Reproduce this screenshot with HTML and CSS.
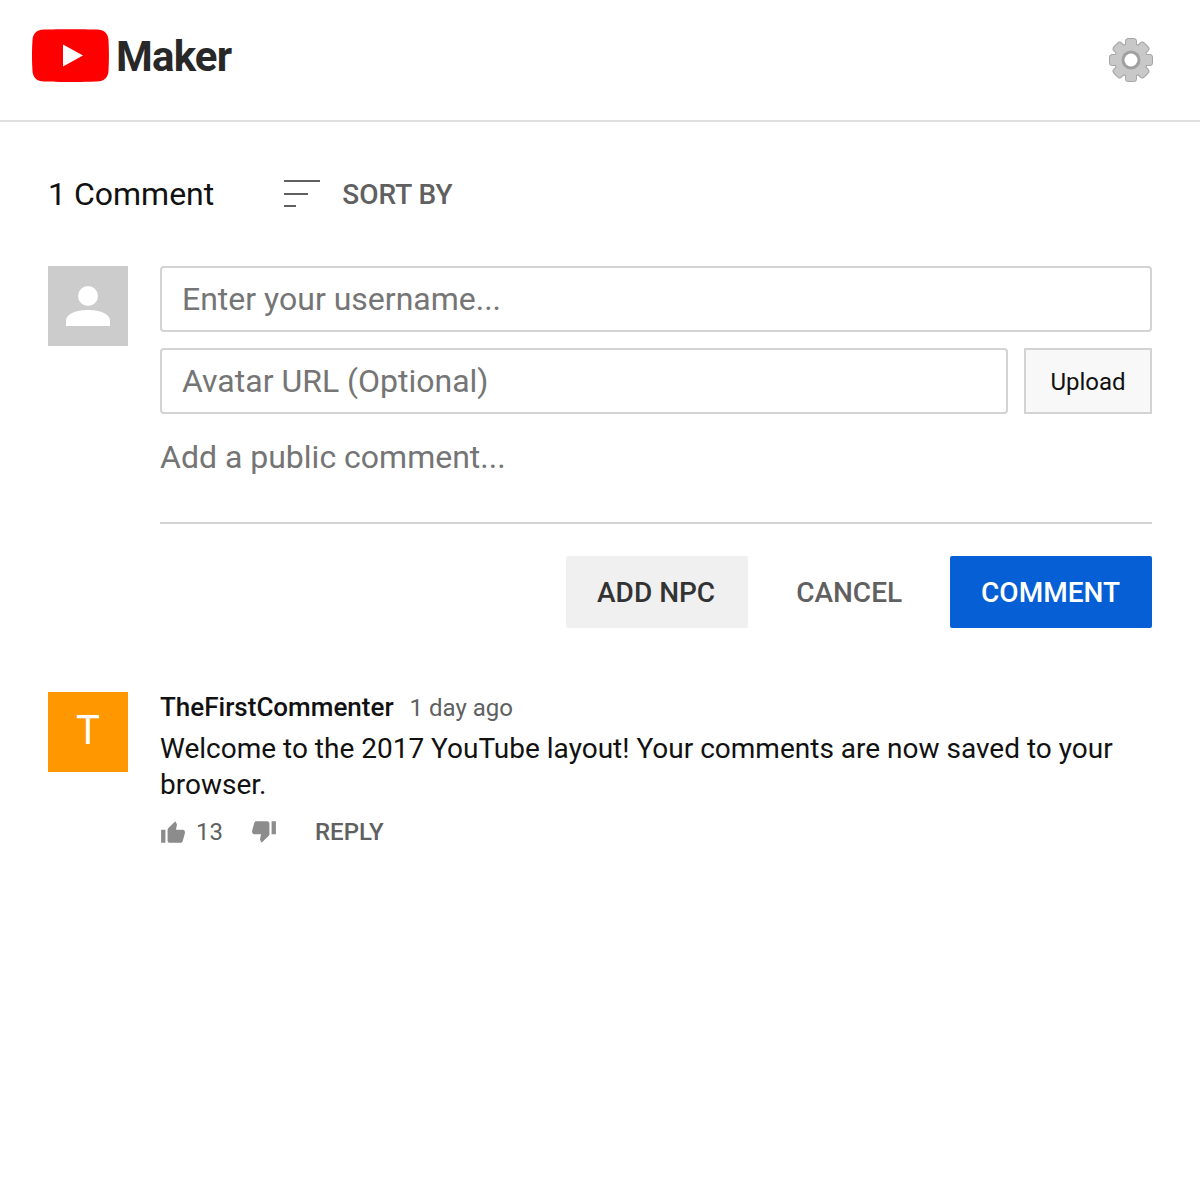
FILE: index.html
```html
<!DOCTYPE html>
<html>
<head>
    <meta charset="UTF-8">
    <title>YouTube Comment Maker</title>
    <link rel="stylesheet" href="styles.css">
</head>
<body>
    <div class="header">
        <div class="brand">
            <svg class="logo" viewBox="0 0 77 53">
                <path d="M12 .5C25 0 52 0 65 .5 72 .8 76 4 76.500 11c.6 10 .6 21 0 31-.5 7-4.500 10.200-11.500 10.500-13 .6-40 .6-53 0C5 52.200 1 49 .5 42-.2 32-.2 21 .5 11 1 4 5 .8 12 .5z" fill="#f00"/>
                <path d="M31 15.500 51 26.500 31 37.500z" fill="#fff"/>
            </svg>
            <span class="brand-name">Maker</span>
        </div>
        <svg class="gear" viewBox="0 0 44 44">
            <defs>
                <g id="gear-shape">
                    <rect x="17" y="1" width="10" height="42" rx="2.500"/>
                    <rect x="17" y="1" width="10" height="42" rx="2.500" transform="rotate(45 22 22)"/>
                    <rect x="17" y="1" width="10" height="42" rx="2.500" transform="rotate(90 22 22)"/>
                    <rect x="17" y="1" width="10" height="42" rx="2.500" transform="rotate(135 22 22)"/>
                    <circle cx="22" cy="22" r="16"/>
                </g>
            </defs>
            <use href="#gear-shape" fill="#a6a6a6" stroke="#a6a6a6" stroke-width="2"/>
            <use href="#gear-shape" fill="#c8c8c8"/>
            <circle cx="22" cy="22" r="9.500" fill="#a0a0a0"/>
            <circle cx="22" cy="22" r="6.500" fill="#fff"/>
        </svg>
    </div>

    <div class="main">
        <div class="count-row">
            <span class="count">1 Comment</span>
            <div class="sort">
                <svg class="sort-icon" viewBox="0 0 36 28">
                    <path d="M0 1h36M0 14h24M0 26h12" stroke="#606060" stroke-width="2" fill="none"/>
                </svg>
                <span class="sort-label">SORT BY</span>
            </div>
        </div>

        <div class="composer">
            <div class="avatar avatar-empty">
                <svg class="person" viewBox="0 0 44 40">
                    <circle cx="22" cy="10" r="10" fill="#fff"/>
                    <path d="M0 40v-5C0 27 12 24 22 24s22 3 22 11v5z" fill="#fff"/>
                </svg>
            </div>
            <div class="composer-body">
                <input class="text-input" type="text" placeholder="Enter your username...">
                <div class="url-row">
                    <input class="text-input url-input" type="text" placeholder="Avatar URL (Optional)">
                    <button class="upload-btn">Upload</button>
                </div>
                <div class="comment-box">Add a public comment...</div>
                <div class="button-row">
                    <button class="btn btn-npc">ADD NPC</button>
                    <button class="btn btn-cancel">CANCEL</button>
                    <button class="btn btn-primary">COMMENT</button>
                </div>
            </div>
        </div>

        <div class="comment">
            <div class="avatar avatar-letter">T</div>
            <div class="comment-body">
                <div class="comment-head">
                    <span class="author">TheFirstCommenter</span>
                    <span class="time">1 day ago</span>
                </div>
                <div class="comment-text">Welcome to the 2017 YouTube layout! Your comments are now saved to your browser.</div>
                <div class="comment-actions">
                    <svg class="thumb" viewBox="0 0 24 24">
                        <path d="M1 22h4V10H1v12zm22-10c0-1.100-.9-2-2-2h-6.310l.95-4.570.03-.32c0-.41-.17-.79-.44-1.060L14.170 2 7.590 8.590C7.220 8.950 7 9.450 7 10v10c0 1.100.9 2 2 2h10c.83 0 1.540-.5 1.840-1.220l2.020-7.050c.09-.23.14-.47.14-.73v-1z" fill="#8c8c8c"/>
                    </svg>
                    <span class="likes">13</span>
                    <svg class="thumb thumb-down" viewBox="0 0 24 24">
                        <path d="M1 22h4V10H1v12zm22-10c0-1.100-.9-2-2-2h-6.310l.95-4.570.03-.32c0-.41-.17-.79-.44-1.060L14.170 2 7.590 8.590C7.220 8.950 7 9.450 7 10v10c0 1.100.9 2 2 2h10c.83 0 1.540-.5 1.840-1.220l2.020-7.050c.09-.23.14-.47.14-.73v-1z" fill="#8c8c8c"/>
                    </svg>
                    <span class="reply">REPLY</span>
                </div>
            </div>
        </div>
    </div>
</body>
</html>
```

FILE: styles.css
```css
* {
    box-sizing: border-box;
}
body {
    margin: 0;
    background: #fff;
    font-family: Roboto, "Liberation Sans", sans-serif;
    color: #111;
}
.header {
    display: flex;
    justify-content: space-between;
    align-items: center;
    height: 122px;
    padding: 0 47px 0 32px;
    border-bottom: 2px solid #e0e0e0;
}
.brand {
    display: flex;
    align-items: center;
    gap: 7px;
    margin-bottom: 9px;
}
.logo {
    width: 77px;
    height: 53px;
}
.brand-name {
    padding-top: 2px;
    font-size: 42px;
    font-weight: 700;
    color: #282828;
    letter-spacing: -0.8px;
}
.gear {
    width: 44px;
    height: 44px;
    filter: blur(0.5px);
}
.main {
    padding: 0 48px;
}
.count-row {
    display: flex;
    align-items: center;
    height: 144px;
    gap: 70px;
}
.count {
    font-size: 32px;
}
.sort {
    display: flex;
    align-items: center;
    gap: 22px;
}
.sort-icon {
    width: 36px;
    height: 28px;
}
.sort-label {
    font-size: 28px;
    font-weight: 500;
    color: #606060;
}
.composer {
    display: flex;
    gap: 32px;
}
.avatar {
    flex: none;
    width: 80px;
    height: 80px;
    display: flex;
    align-items: center;
    justify-content: center;
}
.avatar-empty {
    background: #ccc;
}
.person {
    width: 44px;
    height: 40px;
}
.composer-body {
    flex: 1;
}
.text-input {
    display: block;
    width: 100%;
    height: 66px;
    padding: 0 20px;
    border: 2px solid #d3d3d3;
    border-radius: 4px;
    outline: none;
    font-family: inherit;
    font-size: 32px;
}
.text-input::placeholder {
    color: #757575;
    opacity: 1;
}
.url-row {
    display: flex;
    gap: 16px;
    margin-top: 16px;
}
.url-input {
    flex: 1;
}
.upload-btn {
    width: 128px;
    height: 66px;
    padding: 2px 0 0;
    border: 2px solid #d3d3d3;
    background: #f8f8f8;
    font-family: inherit;
    font-size: 24px;
    color: #111;
}
.comment-box {
    height: 110px;
    padding-top: 24px;
    border-bottom: 2px solid #d3d3d3;
    font-size: 32px;
    line-height: 38px;
    color: #757575;
}
.button-row {
    display: flex;
    justify-content: flex-end;
    margin-top: 32px;
}
.btn {
    height: 72px;
    padding: 0 32px 0 31px;
    border: none;
    border-radius: 2px;
    font-family: inherit;
    font-size: 28px;
    font-weight: 500;
}
.btn-npc {
    padding: 0 33px 0 31px;
    background: #f0f0f0;
    color: #333;
}
.btn-cancel {
    background: none;
    color: #606060;
    padding: 0 48px;
}
.btn-primary {
    background: #065fd4;
    color: #fff;
}
.comment {
    display: flex;
    gap: 32px;
    margin-top: 64px;
}
.avatar-letter {
    padding-bottom: 4px;
    background: #ff9800;
    color: #fff;
    font-size: 40px;
}
.comment-body {
    flex: 1;
}
.comment-head {
    display: flex;
    align-items: baseline;
    gap: 16px;
    height: 31px;
    line-height: 30px;
}
.author {
    font-size: 26px;
    font-weight: 500;
}
.time {
    font-size: 24px;
    color: #606060;
}
.comment-text {
    margin-top: 8px;
    font-size: 28px;
    line-height: 36px;
}
.comment-actions {
    display: flex;
    align-items: center;
    margin-top: 11px;
    height: 36px;
}
.thumb {
    width: 26px;
    height: 26px;
}
.thumb-down {
    transform: rotate(180deg);
    margin: 0 38px 0 28px;
}
.likes {
    margin-left: 10px;
    font-size: 24px;
    color: #606060;
}
.reply {
    font-size: 24px;
    font-weight: 500;
    color: #606060;
}
```
